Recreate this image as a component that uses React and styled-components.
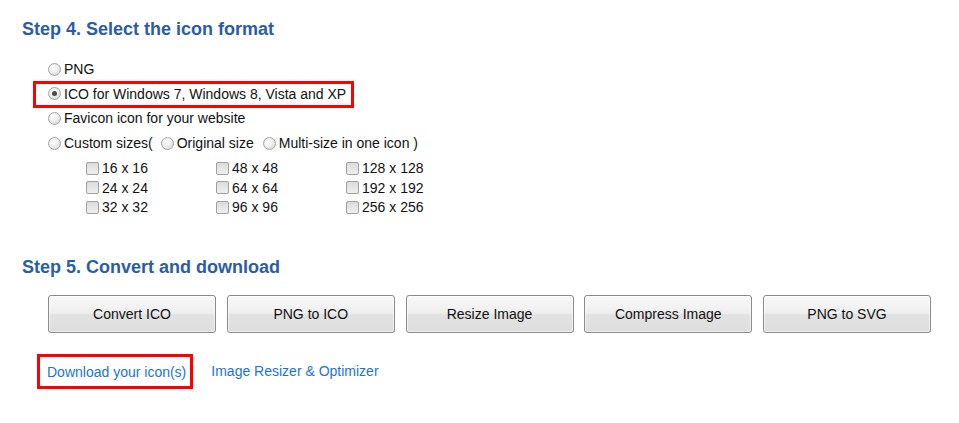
import React from "react";
import styled, { createGlobalStyle } from "styled-components";

const Global = createGlobalStyle`
  html, body { margin: 0; padding: 0; background: #fff; }
  body { font-family: Arial, "Liberation Sans", sans-serif; color: #111; }
`;

const Page = styled.div`
  padding: 18px 0 0 22px;
  width: 937px;
`;

const Heading = styled.h2`
  margin: 0;
  font-size: 18px;
  font-weight: bold;
  color: #2b5ca8;
  line-height: 22px;
`;

const OptionList = styled.div`
  margin-top: 17px;
  padding-left: 26px;
  display: flex;
  flex-direction: column;
`;

const Option = styled.label`
  display: flex;
  align-items: center;
  height: 24.6px;
  font-size: 14px;
  color: #111;
  align-self: flex-start;
  position: relative;
`;

const Highlight = styled.span`
  position: absolute;
  left: -15px;
  top: -1px;
  right: -8px;
  bottom: -2px;
  border: 3px solid #ff0000;
  pointer-events: none;
`;

const Radio = styled.span`
  width: 11px;
  height: 11px;
  border-radius: 50%;
  border: 1px solid #a4a4a4;
  background: radial-gradient(circle at 40% 35%, #ffffff 0%, #f0f0f0 40%, #cfcfcf 100%);
  margin: 0 3px 0 ${(p) => p.$ml || 0}px;
  display: inline-flex;
  align-items: center;
  justify-content: center;
  flex: none;
  &::after {
    content: "";
    display: ${(p) => (p.$checked ? "block" : "none")};
    width: 5px;
    height: 5px;
    border-radius: 50%;
    background: #4a4a4a;
  }
`;

const SizeGrid = styled.div`
  display: grid;
  grid-template-columns: 130px 130px 130px;
  grid-auto-rows: 19.5px;
  margin: 3px 0 0 38px;
`;

const SizeItem = styled.label`
  display: flex;
  align-items: center;
  font-size: 14px;
  color: #111;
`;

const Check = styled.span`
  width: 11px;
  height: 11px;
  border: 1px solid #a0a0a0;
  border-radius: 2px;
  background: linear-gradient(#dcdcdc, #efefef);
  margin-right: 3px;
  flex: none;
`;

const Section5 = styled.div`
  margin-top: 39px;
`;

const ButtonRow = styled.div`
  display: flex;
  gap: 10.75px;
  margin: 17px 0 0 26px;
`;

const Button = styled.button`
  width: 168px;
  height: 38px;
  border: 1px solid #8a8a8a;
  border-radius: 3px;
  background: linear-gradient(#f9f9f9 0%, #eeeeee 48%, #e2e2e2 52%, #dedede 100%);
  font-family: Arial, "Liberation Sans", sans-serif;
  font-size: 14px;
  color: #111;
  padding: 0;
  box-shadow: inset 0 0 0 1px rgba(255, 255, 255, 0.6);
`;

const LinkRow = styled.div`
  display: flex;
  align-items: center;
  gap: 18px;
  margin: 21px 0 0 15px;
`;

const Link = styled.a`
  font-size: 14px;
  line-height: 16px;
  color: #1a73e0;
  text-decoration: none;
  padding: ${(p) => (p.$boxed ? "7px 4px 6px 7px" : "0")};
  border: ${(p) => (p.$boxed ? "3px solid #ff0000" : "none")};
`;

const sizes = [
  ["16 x 16", "48 x 48", "128 x 128"],
  ["24 x 24", "64 x 64", "192 x 192"],
  ["32 x 32", "96 x 96", "256 x 256"],
];

export default function App() {
  return (
    <Page>
      <Global />
      <Heading>Step 4. Select the icon format</Heading>
      <OptionList>
        <Option>
          <Radio />PNG
        </Option>
        <Option>
          <Highlight />
          <Radio $checked />ICO for Windows 7, Windows 8, Vista and XP
        </Option>
        <Option>
          <Radio />Favicon icon for your website
        </Option>
        <Option>
          <Radio />Custom sizes(
          <Radio $ml={8} />Original size
          <Radio $ml={9} />Multi-size in one icon )
        </Option>
        <SizeGrid>
          {sizes.flat().map((s) => (
            <SizeItem key={s}>
              <Check />
              {s}
            </SizeItem>
          ))}
        </SizeGrid>
      </OptionList>
      <Section5>
        <Heading>Step 5. Convert and download</Heading>
        <ButtonRow>
          <Button>Convert ICO</Button>
          <Button>PNG to ICO</Button>
          <Button>Resize Image</Button>
          <Button>Compress Image</Button>
          <Button>PNG to SVG</Button>
        </ButtonRow>
        <LinkRow>
          <Link $boxed>Download your icon(s)</Link>
          <Link>Image Resizer &amp; Optimizer</Link>
        </LinkRow>
      </Section5>
    </Page>
  );
}
